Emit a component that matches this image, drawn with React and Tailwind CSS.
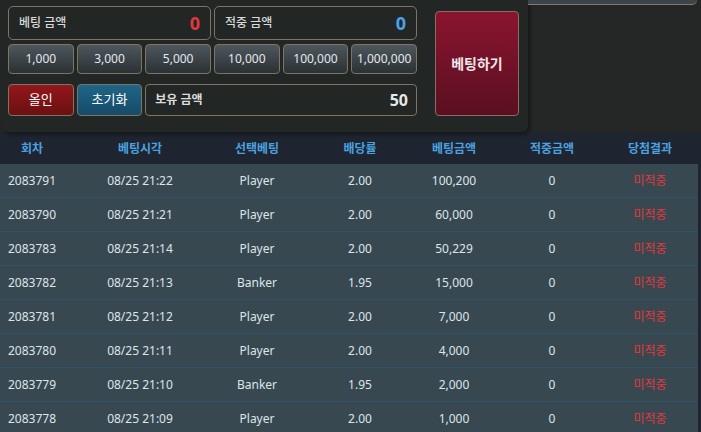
import React from "react";

const rows = [
  { no: "2083791", time: "08/25 21:22", pick: "Player", odds: "2.00", bet: "100,200" },
  { no: "2083790", time: "08/25 21:21", pick: "Player", odds: "2.00", bet: "60,000" },
  { no: "2083783", time: "08/25 21:14", pick: "Player", odds: "2.00", bet: "50,229" },
  { no: "2083782", time: "08/25 21:13", pick: "Banker", odds: "1.95", bet: "15,000" },
  { no: "2083781", time: "08/25 21:12", pick: "Player", odds: "2.00", bet: "7,000" },
  { no: "2083780", time: "08/25 21:11", pick: "Player", odds: "2.00", bet: "4,000" },
  { no: "2083779", time: "08/25 21:10", pick: "Banker", odds: "1.95", bet: "2,000" },
  { no: "2083778", time: "08/25 21:09", pick: "Player", odds: "2.00", bet: "1,000" },
];

const chips = ["1,000", "3,000", "5,000", "10,000", "100,000", "1,000,000"];
const heads = ["회차", "베팅시각", "선택베팅", "배당률", "베팅금액", "적중금액", "당첨결과"];
const cols = "grid grid-cols-[64px_152px_82px_124px_64px_132px_64px]";

export default function App() {
  return (
    <div className="w-[701px] h-[432px] overflow-hidden bg-[#1e2530] text-[12px] font-['Noto_Sans','Noto_Sans_CJK_KR',sans-serif]">
      <div className="flex h-[133px] bg-[#252726]">
        <div className="w-[526px] ml-[2px] h-[132px] flex gap-[18px] pl-[6px] pt-[6px] bg-[#222624] rounded-b-md shadow-[2px_2px_4px_rgba(0,0,0,0.45)]">
          <div className="w-[409px] flex flex-col">
            <div className="grid grid-cols-2 gap-[3px] h-[34px]">
              <div className="flex items-center justify-between px-[10px] border border-[#7d7463] rounded-[5px]">
                <span className="text-[#d9d9d9] font-medium">베팅 금액</span>
                <span className="text-[#e2383c] text-[18px] font-bold">0</span>
              </div>
              <div className="flex items-center justify-between px-[10px] border border-[#7d7463] rounded-[5px]">
                <span className="text-[#d9d9d9] font-medium">적중 금액</span>
                <span className="text-[#4aa3e6] text-[18px] font-bold">0</span>
              </div>
            </div>
            <div className="grid grid-cols-6 gap-[3px] h-[30px] mt-[4px]">
              {chips.map((c) => (
                <button
                  key={c}
                  className="flex items-center justify-center text-[12px] text-[#e4e8ea] bg-gradient-to-b from-[#4d575c] to-[#2b3236] border border-[#7d7463] rounded-[4px]"
                >
                  {c}
                </button>
              ))}
            </div>
            <div className="grid grid-cols-6 gap-[3px] h-[32px] mt-[10px]">
              <button className="flex items-center justify-center text-[13px] text-white bg-gradient-to-b from-[#93171a] to-[#6b1010] border border-[#7d7463] rounded-[4px]">
                올인
              </button>
              <button className="flex items-center justify-center text-[13px] text-white bg-gradient-to-b from-[#1e6689] to-[#164a68] border border-[#7d7463] rounded-[4px]">
                초기화
              </button>
              <div className="col-span-4 flex items-center justify-between pl-[9px] pr-[8px] border border-[#7d7463] rounded-[4px]">
                <span className="text-[#dcdcdc] font-bold">보유 금액</span>
                <span className="text-[#e8e8e8] text-[16px] font-bold">50</span>
              </div>
            </div>
          </div>
          <button className="mt-[5px] w-[84px] h-[105px] flex items-center justify-center text-[14px] font-bold text-[#f0e8ea] bg-gradient-to-b from-[#8b1430] to-[#5a0f20] border border-[#8e6b60] rounded-[4px]">
            베팅하기
          </button>
        </div>
        <div className="flex-1">
          <div className="h-[5px] mr-[4px] bg-[#3b4448] border-b border-[#857a64] rounded-br-md" />
        </div>
      </div>

      <div className={`${cols} h-[31px] items-center text-[#4ba2e0] font-bold`}>
        {heads.map((h) => (
          <div key={h} className="text-center">{h}</div>
        ))}
      </div>

      <div className="w-[698px]">
        {rows.map((r) => (
          <div
            key={r.no}
            className={`${cols} h-[34px] items-center bg-[#384851] border-b border-[#2e5368] text-[#dde5e9]`}
          >
            <div className="text-center">{r.no}</div>
            <div className="text-center">{r.time}</div>
            <div className="text-center">{r.pick}</div>
            <div className="text-center">{r.odds}</div>
            <div className="text-center">{r.bet}</div>
            <div className="text-center">0</div>
            <div className="text-center text-[#e2383c]">미적중</div>
          </div>
        ))}
      </div>
    </div>
  );
}
